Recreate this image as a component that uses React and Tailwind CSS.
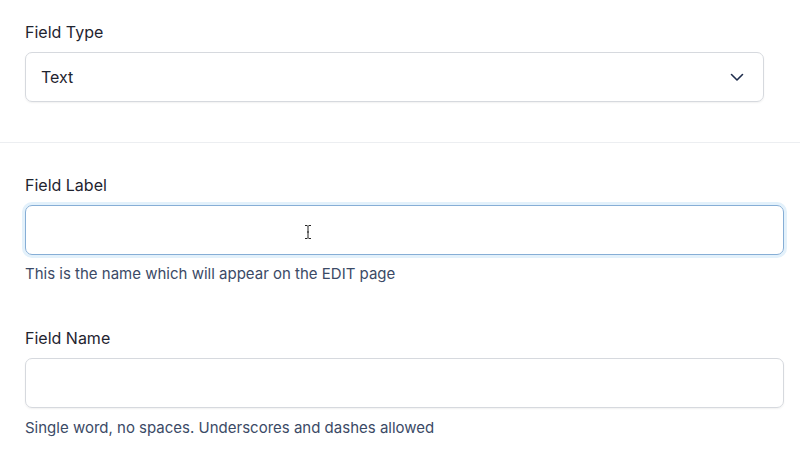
import React from "react";

function Chevron() {
  return (
    <svg width="16" height="16" viewBox="0 0 16 16" fill="none" className="text-[#1f2d4d]">
      <path d="M2.5 5.5 8 11l5.5-5.5" stroke="currentColor" strokeWidth="1.6" strokeLinecap="round" strokeLinejoin="round" />
    </svg>
  );
}

function IBeam() {
  return (
    <svg width="8" height="16" viewBox="0 0 8 16" className="absolute left-[278px] top-[18px]">
      <path d="M1 1.5h2.2L4 2.5l.8-1H7M4 2.5v11M1 14.5h2.2l.8-1 .8 1H7M3 8h2" stroke="#222" strokeWidth="1" fill="none" />
    </svg>
  );
}

export default function App() {
  return (
    <div className="w-[800px] h-[456px] bg-white overflow-hidden font-['Inter',sans-serif] text-[#1f2430]">
      {/* Field type */}
      <div className="pl-[25px] pr-[36px] pt-[22px] pb-[40px] border-b border-[#eceef1]">
        <label className="block text-[16px] leading-[20px] mb-[10px]">Field Type</label>
        <div className="flex items-center justify-between h-[50px] pl-[15px] pr-[16px] rounded-[7px] border border-[#d6d9de] shadow-[0_1px_2px_rgba(0,0,0,0.06)]">
          <span className="text-[16px]">Text</span>
          <span className="mr-[2px]"><Chevron /></span>
        </div>
      </div>

      {/* Field label */}
      <div className="pl-[25px] pr-[16px] pt-[32px]">
        <label className="block text-[16px] leading-[20px] mb-[10px]">Field Label</label>
        <div className="relative h-[50px] rounded-[7px] border border-[#86aed6] ring-[3px] ring-[#e3f1fb]">
          <IBeam />
        </div>
        <p className="mt-[9px] text-[15px] leading-[20px] text-[#3b4a66]">This is the name which will appear on the EDIT page</p>
      </div>

      {/* Field name */}
      <div className="pl-[25px] pr-[16px] pt-[44px]">
        <label className="block text-[16px] leading-[20px] mb-[10px]">Field Name</label>
        <div className="h-[50px] rounded-[7px] border border-[#d6d9de] shadow-[0_1px_2px_rgba(0,0,0,0.06)]" />
        <p className="mt-[10px] text-[15px] leading-[20px] text-[#3b4a66]">Single word, no spaces. Underscores and dashes allowed</p>
      </div>
    </div>
  );
}
